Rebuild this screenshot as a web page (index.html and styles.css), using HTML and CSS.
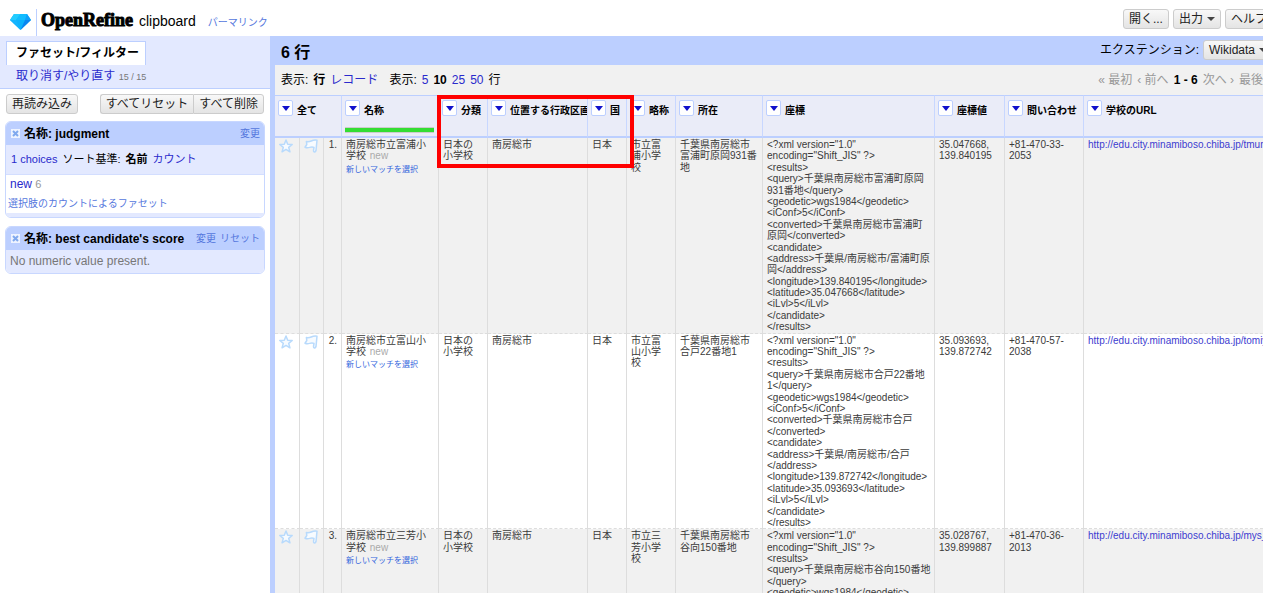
FILE: index.html
```html
<!DOCTYPE html>
<html lang="ja">
<head>
<meta charset="utf-8">
<title>clipboard - OpenRefine</title>
<link rel="stylesheet" href="styles.css">
</head>
<body>
<svg class="defs" width="0" height="0" aria-hidden="true">
  <symbol id="star" viewBox="0 0 14 14"><path d="M7 1l1.700 4.200 4.500.300-3.500 2.900 1.200 4.400L7 10.400l-3.900 2.400 1.200-4.400L.8 5.500l4.500-.3z" fill="#f7fbff" stroke="#b8dafc" stroke-width="1.500" stroke-linejoin="round"/></symbol>
  <symbol id="flag" viewBox="0 0 14 14"><path d="M13 1.200L12 11.500Q11.600 13.200 10.200 12.900 9.300 12.500 9.600 11L10 8.400Q8 7.400 5.500 8.400 3.200 9.200 1 8.200L2.800 5.500 2.400 2.600Q5 3 7.200 2 10 .7 13 1.200z" fill="#f7fbff" stroke="#b8dafc" stroke-width="1.500" stroke-linejoin="round"/></symbol>
</svg>
<div class="app">
  <header class="top">
    <svg class="gem" viewBox="0 0 21 16" aria-hidden="true">
      <path d="M4 0h13l4 6-10.500 10L0 6z" fill="#0cb2fc"/>
      <path d="M4 0h6.500L6 6H0z" fill="#22ccff"/><path d="M10.500 0H17l-2 6H6z" fill="#12bcff"/>
      <path d="M17 0l4 6h-6z" fill="#0ea0fa"/><path d="M0 6h6l4.500 10z" fill="#14b4ff"/><path d="M15 6h6L10.500 16z" fill="#0a86f0"/>
    </svg>
    <div class="brand"><span class="logo">OpenRefine</span><h1 class="project">clipboard</h1><a class="permalink" href="#">パーマリンク</a></div>
    <div class="actions">
      <button class="button" type="button">開く...</button>
      <button class="button" type="button">出力<span class="caret"></span></button>
      <button class="button" type="button">ヘルプ</button>
    </div>
  </header>
  <div class="main">
    <aside class="side">
      <nav class="tabs">
        <a class="tab active" href="#">ファセット/フィルター</a>
        <a class="tab" href="#">取り消す/やり直す <small>15 / 15</small></a>
      </nav>
      <div class="facet-tools">
        <button class="button" type="button">再読み込み</button>
        <div class="group"><button class="button" type="button">すべてリセット</button><button class="button" type="button">すべて削除</button></div>
      </div>
      <section class="facet">
        <div class="facet-head"><button class="close" type="button" aria-label="閉じる"><svg viewBox="0 0 9 9"><path d="M2 2l5 5M7 2L2 7" stroke="#7fa8ee" stroke-width="2"/></svg></button><h2>名称: judgment</h2><a href="#">変更</a></div>
        <div class="facet-sort"><a href="#">1 choices</a><span>ソート基準:</span><b>名前</b><a href="#">カウント</a></div>
        <div class="facet-body"><div class="choice"><a href="#">new</a> <small>6</small></div><a class="by-count" href="#">選択肢のカウントによるファセット</a></div>
        <div class="facet-foot"></div>
      </section>
      <section class="facet">
        <div class="facet-head"><button class="close" type="button" aria-label="閉じる"><svg viewBox="0 0 9 9"><path d="M2 2l5 5M7 2L2 7" stroke="#7fa8ee" stroke-width="2"/></svg></button><h2>名称: best candidate's score</h2><a href="#">変更</a><a href="#">リセット</a></div>
        <p class="facet-empty">No numeric value present.</p>
      </section>
    </aside>
    <main class="content">
      <div class="summary"><h2>6 行</h2><div class="ext"><span>エクステンション:</span><button class="button" type="button">Wikidata<span class="caret"></span></button></div></div>
      <div class="view">
        <div class="modes"><span>表示:</span><b>行</b><a href="#">レコード</a></div>
        <div class="sizes"><span>表示:</span><a href="#">5</a><b>10</b><a href="#">25</a><a href="#">50</a><span>行</span></div>
        <div class="pager"><span>« 最初</span><span>‹ 前へ</span><b>1 - 6</b><span>次へ ›</span><span>最後</span></div>
      </div>
      <div class="grid">
        <table>
          <colgroup><col class="w-star"><col class="w-flag"><col class="w-num"><col class="w-name"><col class="w-short"><col class="w-area"><col class="w-country"><col class="w-short"><col class="w-addr"><col class="w-xml"><col class="w-coord"><col class="w-phone"><col></colgroup>
          <thead><tr>
            <th colspan="3"><div class="col"><button class="drop" type="button" aria-label="全て メニュー"></button>全て</div></th>
            <th><div class="col"><button class="drop" type="button" aria-label="名称 メニュー"></button>名称</div><div class="match"></div></th>
            <th><div class="col"><button class="drop" type="button" aria-label="分類 メニュー"></button>分類</div></th>
            <th><div class="col"><button class="drop" type="button" aria-label="位置する行政区画 メニュー"></button>位置する行政区画</div></th>
            <th><div class="col"><button class="drop" type="button" aria-label="国 メニュー"></button>国</div></th>
            <th><div class="col"><button class="drop" type="button" aria-label="略称 メニュー"></button>略称</div></th>
            <th><div class="col"><button class="drop" type="button" aria-label="所在 メニュー"></button>所在</div></th>
            <th><div class="col"><button class="drop" type="button" aria-label="座標 メニュー"></button>座標</div></th>
            <th><div class="col"><button class="drop" type="button" aria-label="座標値 メニュー"></button>座標値</div></th>
            <th><div class="col"><button class="drop" type="button" aria-label="問い合わせ メニュー"></button>問い合わせ</div></th>
            <th><div class="col"><button class="drop" type="button" aria-label="学校のURL メニュー"></button>学校のURL</div></th>
          </tr></thead>
          <tbody>
            <tr>
              <td class="mark"><svg><use href="#star"/></svg></td><td class="mark"><svg><use href="#flag"/></svg></td><td class="num">1.</td>
              <td>南房総市立富浦小学校 <span class="new">new</span><a class="rematch" href="#">新しいマッチを選択</a></td>
              <td>日本の小学校</td><td>南房総市</td><td>日本</td><td>市立富浦小学校</td><td>千葉県南房総市富浦町原岡931番地</td>
              <td class="xml">&lt;?xml version="1.0" encoding="Shift_JIS" ?&gt;
&lt;results&gt;
&lt;query&gt;千葉県南房総市富浦町原岡931番地&lt;/query&gt;
&lt;geodetic&gt;wgs1984&lt;/geodetic&gt;
&lt;iConf&gt;5&lt;/iConf&gt;
&lt;converted&gt;千葉県南房総市富浦町原岡&lt;/converted&gt;
&lt;candidate&gt;
&lt;address&gt;千葉県/南房総市/富浦町原岡&lt;/address&gt;
&lt;longitude&gt;139.840195&lt;/longitude&gt;
&lt;latitude&gt;35.047668&lt;/latitude&gt;
&lt;iLvl&gt;5&lt;/iLvl&gt;
&lt;/candidate&gt;
&lt;/results&gt;</td>
              <td>35.047668, 139.840195</td><td>+81-470-33-2053</td><td class="url"><a href="#">http://edu.city.minamiboso.chiba.jp/tmur_</a></td>
            </tr>
            <tr>
              <td class="mark"><svg><use href="#star"/></svg></td><td class="mark"><svg><use href="#flag"/></svg></td><td class="num">2.</td>
              <td>南房総市立富山小学校 <span class="new">new</span><a class="rematch" href="#">新しいマッチを選択</a></td>
              <td>日本の小学校</td><td>南房総市</td><td>日本</td><td>市立富山小学校</td><td>千葉県南房総市合戸22番地1</td>
              <td class="xml">&lt;?xml version="1.0" encoding="Shift_JIS" ?&gt;
&lt;results&gt;
&lt;query&gt;千葉県南房総市合戸22番地1&lt;/query&gt;
&lt;geodetic&gt;wgs1984&lt;/geodetic&gt;
&lt;iConf&gt;5&lt;/iConf&gt;
&lt;converted&gt;千葉県南房総市合戸&lt;/converted&gt;
&lt;candidate&gt;
&lt;address&gt;千葉県/南房総市/合戸&lt;/address&gt;
&lt;longitude&gt;139.872742&lt;/longitude&gt;
&lt;latitude&gt;35.093693&lt;/latitude&gt;
&lt;iLvl&gt;5&lt;/iLvl&gt;
&lt;/candidate&gt;
&lt;/results&gt;</td>
              <td>35.093693, 139.872742</td><td>+81-470-57-2038</td><td class="url"><a href="#">http://edu.city.minamiboso.chiba.jp/tomiy</a></td>
            </tr>
            <tr>
              <td class="mark"><svg><use href="#star"/></svg></td><td class="mark"><svg><use href="#flag"/></svg></td><td class="num">3.</td>
              <td>南房総市立三芳小学校 <span class="new">new</span><a class="rematch" href="#">新しいマッチを選択</a></td>
              <td>日本の小学校</td><td>南房総市</td><td>日本</td><td>市立三芳小学校</td><td>千葉県南房総市谷向150番地</td>
              <td class="xml">&lt;?xml version="1.0" encoding="Shift_JIS" ?&gt;
&lt;results&gt;
&lt;query&gt;千葉県南房総市谷向150番地&lt;/query&gt;
&lt;geodetic&gt;wgs1984&lt;/geodetic&gt;</td>
              <td>35.028767, 139.899887</td><td>+81-470-36-2013</td><td class="url"><a href="#">http://edu.city.minamiboso.chiba.jp/mys_</a></td>
            </tr>
          </tbody>
        </table>
        <div class="highlight"></div>
      </div>
    </main>
  </div>
</div>
</body>
</html>
```

FILE: styles.css
```css
* { box-sizing: border-box; }
body {
  margin: 0;
  overflow: hidden;
  background: #fff;
  color: #000;
  font: 12px/16px "Liberation Sans", "Noto Sans CJK JP", sans-serif;
}
a { color: #2a2acc; text-decoration: none; }
h1, h2, p { margin: 0; }
button { font: inherit; margin: 0; }
.defs { position: absolute; }

/* The workspace is slightly wider than the window and runs off its right edge. */
.app {
  width: calc(100% + 10px);
  height: 100vh;
  display: flex;
  flex-direction: column;
  overflow: hidden;
}

.button {
  height: 20px;
  padding: 0 5px;
  display: inline-flex;
  align-items: center;
  gap: 4px;
  border: 1px solid #ccc;
  border-radius: 3px;
  background: linear-gradient(#f8f8f8, #e4e4e4);
  color: #222;
  white-space: nowrap;
}
.caret {
  border: 4px solid transparent;
  border-top-color: #444;
  border-bottom: 0;
}

.top {
  height: 36px;
  flex: none;
  display: flex;
  align-items: flex-end;
  padding-left: 10px;
}
.gem { width: 21px; height: 16px; margin-bottom: 6px; }
.brand {
  height: 27px;
  margin: 0 auto 0 5px;
  padding-left: 4px;
  border-left: 1px solid #bccfff;
  display: flex;
  align-items: baseline;
}
.logo { font: bold 18px/22px "Liberation Serif", serif; -webkit-text-stroke: 1px #000; }
.project { margin: 0 12px 0 6px; font-size: 14px; font-weight: normal; }
.permalink { font-size: 10px; color: #5577dd; }
.actions { display: flex; gap: 4px; height: 27px; }

.main { flex: 1; min-height: 0; display: flex; }
.side { width: 270px; flex: none; }
.tabs {
  height: 53px;
  padding: 5px 6px 0;
  display: flex;
  flex-direction: column;
  align-items: flex-start;
  background: #e3e9ff;
  border-bottom: 1px solid #bccfff;
}
.tab { height: 23px; padding: 3px 10px 0; white-space: nowrap; }
.tab.active {
  height: 24px;
  padding: 3px 6px 0 9px;
  background: #fff;
  border: 1px solid #bccfff;
  border-bottom: 0;
  color: #000;
  font-weight: bold;
}
.tab small { font-size: 9px; color: #777; }
.facet-tools {
  display: flex;
  justify-content: space-between;
  padding: 5px 6px 7px;
}
.facet-tools .button { padding: 0 5px; }
.group { display: flex; }
.group .button:first-child { border-radius: 3px 0 0 3px; border-right: 0; }
.group .button:last-child { border-radius: 0 3px 3px 0; }

.facet {
  margin: 0 5px 8px;
  border: 1px solid #c8d7ff;
  border-radius: 6px;
  overflow: hidden;
}
.facet-head {
  height: 23px;
  padding: 0 4px 0 5px;
  display: flex;
  align-items: center;
  gap: 4px;
  background: #bccfff;
}
.facet-head h2 { flex: 1; font-size: 12px; white-space: nowrap; }
.facet-head a { font-size: 10px; color: #5577dd; }
.close {
  width: 9px;
  height: 9px;
  padding: 0;
  border: 0;
  background: #eef3ff;
  display: flex;
}
.close svg { width: 9px; height: 9px; }
.facet-sort {
  height: 30px;
  padding: 6px 5px 0;
  display: flex;
  gap: 5px;
  font-size: 11px;
  background: #e3e9ff;
  border-bottom: 1px solid #d3deff;
}
.facet-body { height: 38px; padding: 0 2px; }
.choice { padding: 1px 2px; height: 21px; }
.choice small { font-size: 11px; color: #999; }
.by-count { display: block; font-size: 10px; color: #5577dd; }
.facet-foot { height: 4px; background: #e3e9ff; }
.facet-empty { height: 23px; padding: 3px 4px; color: #777; background: #e3e9ff; }

.content {
  flex: 1;
  min-width: 0;
  display: flex;
  flex-direction: column;
  padding-left: 5px;
  background: #bccfff;
}
.summary {
  height: 29px;
  flex: none;
  display: flex;
  justify-content: space-between;
  padding: 4px 0 0 6px;
}
.summary h2 { font-size: 16px; line-height: 26px; }
.ext { display: flex; gap: 4px; line-height: 20px; }
.view {
  height: 30px;
  flex: none;
  display: flex;
  align-items: center;
  gap: 11px;
  padding: 0 10px 0 6px;
  background: #f1f1f1;
}
.modes, .sizes, .pager { display: flex; gap: 5px; white-space: nowrap; }
.pager { margin-left: auto; color: #999; }
.pager b { color: #000; }

.grid { position: relative; flex: 1; min-height: 0; overflow: hidden; background: #fff; }
table {
  width: 100%;
  table-layout: fixed;
  border-collapse: separate;
  border-spacing: 0;
  font-size: 10px;
  line-height: 1.14;
}
.w-star { width: 25px; }
.w-flag { width: 24px; }
.w-num { width: 18px; }
.w-name { width: 97px; }
.w-short { width: 49px; }
.w-area { width: 100px; }
.w-country { width: 39px; }
.w-addr { width: 87px; }
.w-xml { width: 172px; }
.w-coord { width: 70px; }
.w-phone { width: 79px; }
th {
  height: 43px;
  padding: 4px 0 0 3px;
  background: #eaecf8;
  border-top: 1px solid #bccfff;
  border-right: 1px solid #c8d7ff;
  border-bottom: 2px solid #bccfff;
  vertical-align: top;
  text-align: left;
  overflow: hidden;
  white-space: nowrap;
}
.col { display: flex; gap: 4px; line-height: 22px; height: 20px; }
.drop {
  width: 15px;
  height: 16px;
  flex: none;
  padding: 0;
  display: flex;
  align-items: center;
  justify-content: center;
  background: #fff;
  border: 1px solid #bccfff;
  border-radius: 2px;
}
.drop::before {
  content: "";
  border: 4px solid transparent;
  border-top: 5px solid #1111cc;
  border-bottom: 0;
}
.match {
  height: 6px;
  margin: 7px 4px 0 0;
  background: #33dd33;
  border: 1px solid #ccc;
  border-width: 1px 0;
}
td {
  padding: 1px 5px 0 4px;
  border-right: 1px solid #ddd;
  border-bottom: 1px dashed #ddd;
  vertical-align: top;
  color: #3a3a3a;
}
td a { color: #3c3cd0; }
tbody tr:nth-child(odd) { background: #f1f1f1; }
.mark { padding: 1px 4px 0; }
.mark svg { width: 14px; height: 14px; display: block; }
.num { padding: 1px 4px 0 0; text-align: right; }
.new { margin-left: 1px; color: #aaa; }
.rematch { display: block; padding-top: 3px; font-size: 8px; color: #3366dd; }
.xml { padding-right: 2px; white-space: pre-line; }
.url { white-space: nowrap; }

.highlight {
  position: absolute;
  left: 162px;
  top: 0;
  width: 197px;
  height: 73px;
  border: 4px solid #f00;
}
```
